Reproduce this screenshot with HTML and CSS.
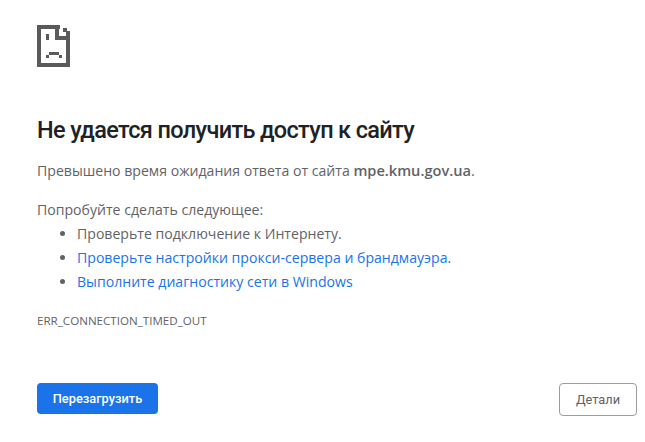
FILE: index.html
```html
<!DOCTYPE html>
<html lang="ru">
<head>
<meta charset="utf-8">
<title>mpe.kmu.gov.ua</title>
<link rel="stylesheet" href="styles.css">
</head>
<body>
<main class="page">
  <svg class="icon" width="33" height="42" viewBox="0 0 33 42" shape-rendering="crispEdges" fill="#5a5a5a" aria-hidden="true">
    <path d="M0 0H23V4H22V11H33V15H18V4H4V38H29V6H33V42H0Z"/>
    <rect x="26" y="3" width="4" height="4"/>
    <rect x="9" y="9" width="3" height="6"/>
    <rect x="9" y="30" width="3" height="3"/>
    <rect x="12" y="27" width="10" height="3"/>
    <rect x="22" y="30" width="3" height="3"/>
  </svg>
  <h1 class="title">Не удается получить доступ к сайту</h1>
  <p class="summary">Превышено время ожидания ответа от сайта <strong>mpe.kmu.gov.ua</strong>.</p>
  <p class="try">Попробуйте сделать следующее:</p>
  <ul class="tips">
    <li>Проверьте подключение к Интернету.</li>
    <li><a href="#">Проверьте настройки прокси-сервера и брандмауэра</a>.</li>
    <li><a href="#">Выполните диагностику сети в Windows</a></li>
  </ul>
  <div class="code">ERR_CONNECTION_TIMED_OUT</div>
  <div class="actions">
    <button class="btn primary">Перезагрузить</button>
    <button class="btn secondary">Детали</button>
  </div>
</main>
</body>
</html>
```
FILE: styles.css
```css
html, body { margin: 0; padding: 0; background: #fff; }
body { font-family: "Open Sans", "Noto Sans", sans-serif; color: #5f6368; font-size: 14.1px; overflow: hidden; }
.page { box-sizing: border-box; height: 442px; padding: 25px 8px 0 37px; display: flex; flex-direction: column; }
.icon { display: block; flex: none; }
.title { margin: 49px 0 0; font-family: Roboto, sans-serif; font-size: 23.5px; line-height: 29px; font-weight: 500; color: #202124; letter-spacing: -0.65px; }
.summary { margin: 15px 0 0; line-height: 20px; }
.summary strong { font-weight: 600; font-size: 14.6px; }
.try { margin: 16px 0 0; line-height: 25px; }
.tips { margin: 0; padding: 0 0 0 40px; line-height: 24px; }
.tips a { color: #1a73e8; text-decoration: none; }
.code { margin-top: 19px; font-size: 11.6px; line-height: 16px; }
.actions { margin-top: 54px; display: flex; justify-content: space-between; align-items: flex-start; }
.btn { box-sizing: border-box; font-family: Roboto, sans-serif; font-size: 12.8px; border-radius: 4px; padding: 0; }
.primary { width: 121px; height: 31px; background: #1a73e8; border: 0; color: #fff; font-weight: 500; }
.secondary { width: 78px; height: 33px; background: #fff; border: 1px solid #9a9ca0; color: #5f6368; font-weight: 400; }
```
